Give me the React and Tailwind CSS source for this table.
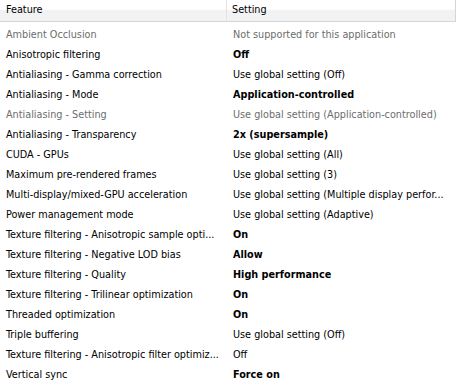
import React from 'react';

const rows = [
    { f: 'Ambient Occlusion', s: 'Not supported for this application', dim: true },
    { f: 'Anisotropic filtering', s: 'Off', bold: true },
    { f: 'Antialiasing - Gamma correction', s: 'Use global setting (Off)' },
    { f: 'Antialiasing - Mode', s: 'Application-controlled', bold: true },
    { f: 'Antialiasing - Setting', s: 'Use global setting (Application-controlled)', dim: true },
    { f: 'Antialiasing - Transparency', s: '2x (supersample)', bold: true },
    { f: 'CUDA - GPUs', s: 'Use global setting (All)' },
    { f: 'Maximum pre-rendered frames', s: 'Use global setting (3)' },
    { f: 'Multi-display/mixed-GPU acceleration', s: 'Use global setting (Multiple display perfor...' },
    { f: 'Power management mode', s: 'Use global setting (Adaptive)' },
    { f: 'Texture filtering - Anisotropic sample opti...', s: 'On', bold: true },
    { f: 'Texture filtering - Negative LOD bias', s: 'Allow', bold: true },
    { f: 'Texture filtering - Quality', s: 'High performance', bold: true },
    { f: 'Texture filtering - Trilinear optimization', s: 'On', bold: true },
    { f: 'Threaded optimization', s: 'On', bold: true },
    { f: 'Triple buffering', s: 'Use global setting (Off)' },
    { f: 'Texture filtering - Anisotropic filter optimiz...', s: 'Off' },
    { f: 'Vertical sync', s: 'Force on', bold: true },
];

const App = () => {
    return (
        <div className="w-[456px] h-[386px] bg-white overflow-hidden text-[10.75px] text-black" style={{ fontFamily: 'Tahoma, "DejaVu Sans Condensed", "Liberation Sans", sans-serif' }}>
            {/* Header */}
            <div className="flex h-[22px] border-b border-[#d5d5d5] bg-[linear-gradient(to_bottom,#ffffff_0%,#ffffff_45%,#f1f2f4_46%,#f1f2f4_100%)]">
                <div className="w-[227px] pl-[6px] flex items-center border-r border-[#e3e3e3]">Feature</div>
                <div className="flex-1 pl-[5px] flex items-center border-r border-[#d5d5d5]">Setting</div>
            </div>

            {/* Rows */}
            <div className="pt-[3px]">
                {rows.map((r, i) => (
                    <div key={i} className={`flex h-[20px] items-center whitespace-nowrap ${r.dim ? 'text-[#6d6d6d]' : ''}`}>
                        <div className="w-[227px] pl-[6px] overflow-hidden">{r.f}</div>
                        <div className={`flex-1 pl-[6px] overflow-hidden ${r.bold ? 'font-bold' : ''}`}>{r.s}</div>
                    </div>
                ))}
            </div>
        </div>
    );
};

export default App;
